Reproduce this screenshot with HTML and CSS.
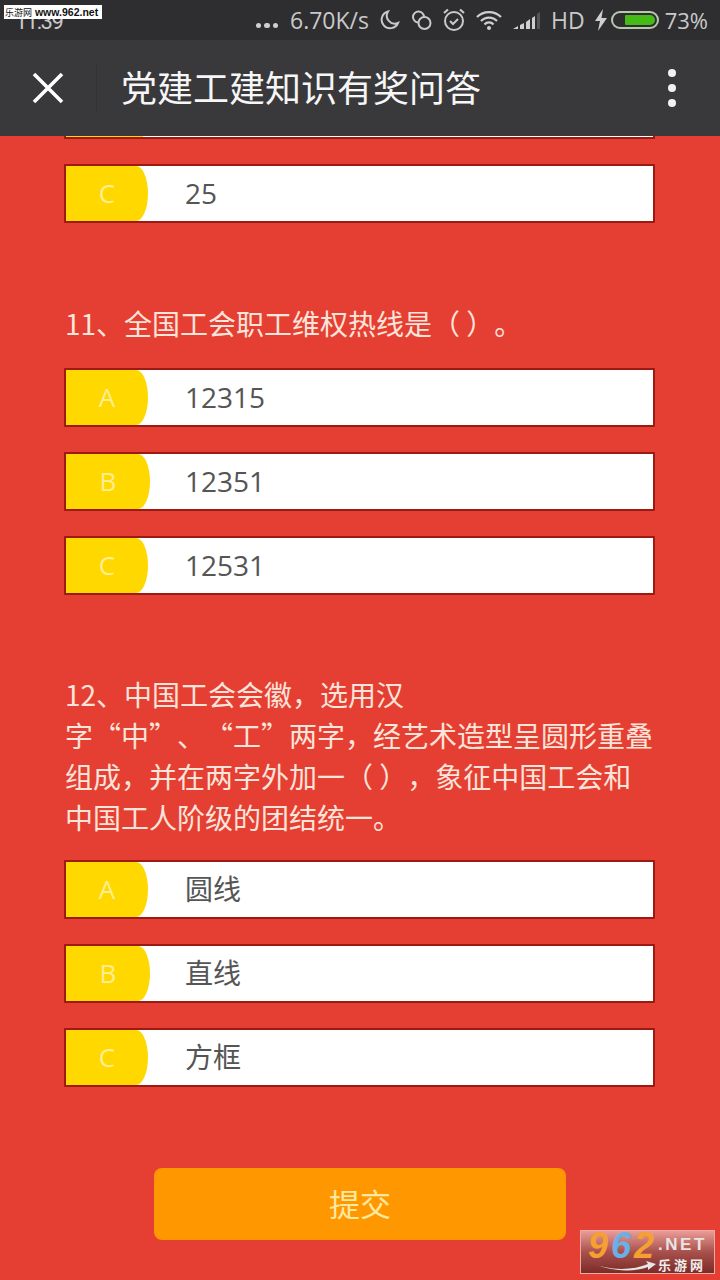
FILE: index.html
```html
<!DOCTYPE html>
<html lang="zh-CN">
<head>
<meta charset="utf-8">
<title>党建工建知识有奖问答</title>
<link rel="stylesheet" href="styles.css">
</head>
<body>
<div class="phone">
  <header class="status">
    <span class="time">11:39</span>
    <div class="status-right">
      <span class="dots"><i></i><i></i><i></i></span>
      <span class="speed">6.70K/s</span>
      <svg class="ic" width="20" height="22" viewBox="0 0 20 22"><path d="M8 2.500a8.500 8.500 0 1 0 10 11.500 8 8 0 0 1-10-11.500z" fill="none" stroke="#c9c9c9" stroke-width="2"/></svg>
      <svg class="ic" width="21" height="22" viewBox="0 0 21 22"><circle cx="7.500" cy="8" r="5.500" fill="none" stroke="#c9c9c9" stroke-width="2"/><circle cx="13.500" cy="14" r="6" fill="#2e2e31" stroke="#c9c9c9" stroke-width="2"/></svg>
      <svg class="ic" width="22" height="24" viewBox="0 0 22 24"><circle cx="11" cy="13" r="9" fill="none" stroke="#c9c9c9" stroke-width="2"/><path d="M7 13l3 3 5-5" fill="none" stroke="#c9c9c9" stroke-width="2"/><path d="M1 5l4-3.500M21 5l-4-3.500" stroke="#c9c9c9" stroke-width="2.200"/></svg>
      <svg class="ic" width="26" height="20" viewBox="0 0 26 20"><path d="M1 7a17 17 0 0 1 24 0M5 11a11 11 0 0 1 16 0M8.500 14.500a6 6 0 0 1 9 0" fill="none" stroke="#cfcfcf" stroke-width="2.200"/><circle cx="13" cy="18" r="2" fill="#cfcfcf"/></svg>
      <svg class="ic" width="27" height="20" viewBox="0 0 27 20"><path d="M0 19l5-3v3zM7 15l4-2v6H7zM13 12l4-3v10h-4zM19 8l3-2v13h-3z" fill="#cfcfcf"/><path d="M24 4l3-2v17h-3z" fill="#55555a"/></svg>
      <span class="hd">HD</span>
      <svg class="ic bolt" width="12" height="22" viewBox="0 0 12 22"><path d="M8 0L0 12h5l-2 10 9-13H6.500z" fill="#cfcfcf"/></svg>
      <span class="battery"><span class="battery-fill"></span></span>
      <span class="pct">73%</span>
    </div>
  </header>

  <nav class="nav">
    <svg class="close" width="34" height="34" viewBox="0 0 34 34"><path d="M3 3l28 28M31 3L3 31" stroke="#fff" stroke-width="3.600"/></svg>
    <span class="divider"></span>
    <h1 class="title">党建工建知识有奖问答</h1>
    <span class="more"><i></i><i></i><i></i></span>
  </nav>

  <main class="content">
    <div class="option-cut"><span class="option-cut-badge"></span></div>
    <div class="option option-first"><span class="badge">C</span><span class="answer">25</span></div>

    <section class="question q-eleven">
      <p class="q-text">11、全国工会职工维权热线是（ ）。</p>
      <div class="option"><span class="badge">A</span><span class="answer">12315</span></div>
      <div class="option"><span class="badge badge-wide">B</span><span class="answer">12351</span></div>
      <div class="option"><span class="badge">C</span><span class="answer">12531</span></div>
    </section>

    <section class="question q-twelve">
      <p class="q-text">12、中国工会会徽，选用汉<br>字“中”、“工”两字，经艺术造型呈圆形重叠组成，并在两字外加一（ ），象征中国工会和中国工人阶级的团结统一。</p>
      <div class="option"><span class="badge">A</span><span class="answer">圆线</span></div>
      <div class="option"><span class="badge badge-wide">B</span><span class="answer">直线</span></div>
      <div class="option"><span class="badge">C</span><span class="answer">方框</span></div>
    </section>

    <div class="submit-row"><button class="submit" type="button">提交</button></div>
  </main>

  <div class="mark-top"><span class="mark-cn">乐游网</span> www.962.net</div>
  <div class="mark-bottom">
    <span class="mark-num"><span class="n-o">9</span><span class="n-b">6</span><span class="n-o">2</span></span>
    <span class="mark-side"><span class="mark-net">.NET</span><span class="mark-yx">乐游网</span></span>
    <svg class="mark-swoosh" width="68" height="12" viewBox="0 0 68 12"><path d="M0 1c18 10 44 10 60 3l-2-3 10 3-8 6 0-3C44 13 18 11 0 1z" fill="#e6e6e6"/></svg>
  </div>
</div>
</body>
</html>
```

FILE: styles.css
```css
* { box-sizing: border-box; }
html, body { margin: 0; padding: 0; }
body {
  width: 720px;
  height: 1280px;
  overflow: hidden;
  font-family: "Noto Sans CJK SC", "Open Sans", sans-serif;
  text-spacing-trim: space-all;
}
.phone {
  position: relative;
  width: 720px;
  height: 1280px;
  display: flex;
  flex-direction: column;
  background: #e53f33;
  overflow: hidden;
}

/* status bar */
.status {
  flex: none;
  height: 40px;
  background: #2e2e31;
  color: #c9c9c9;
  display: flex;
  align-items: center;
  justify-content: space-between;
  padding: 0 12px 0 15px;
  font-family: "Open Sans", sans-serif;
  font-size: 23px;
}
.time {
  position: relative;
  top: 1px;
  font-family: Roboto, sans-serif;
  font-size: 22px;
  letter-spacing: -1.500px;
}
.status-right { display: flex; align-items: center; gap: 11px; }
.dots { display: flex; gap: 3px; margin-right: 1px; align-self: flex-end; padding-bottom: 8px; }
.dots i { width: 5.500px; height: 5.500px; border-radius: 50%; background: #cfcfcf; }
.ic { display: block; }
.bolt { margin-left: -1px; }
.pct { font-size: 22px; }
.battery {
  width: 48px;
  height: 18px;
  margin-left: -7px;
  margin-right: -5px;
  border: 2px solid #b9c9b0;
  border-radius: 9px;
  padding: 2px 2px 2px 12px;
  display: flex;
}
.battery-fill { flex: 1; background: #46bb15; border-radius: 1px 5px 5px 1px; }

/* nav */
.nav {
  flex: none;
  height: 96px;
  background: #39393c;
  display: flex;
  align-items: center;
  color: #fff;
  position: relative;
  z-index: 1;
}
.close { margin: 0 0 0 31px; flex: none; }
.divider { width: 1px; height: 48px; background: #333336; margin-left: 31px; }
.title {
  margin: 0 0 0 24px;
  padding-bottom: 4px;
  font-size: 36px;
  font-weight: 400;
  line-height: 1;
  flex: 1;
  color: #f6f6f6;
}
.more {
  display: flex;
  flex-direction: column;
  gap: 7px;
  margin-right: 44px;
}
.more i { width: 8px; height: 8px; border-radius: 50%; background: #f2f2f2; }

/* content */
.content { flex: 1; padding: 0 65px 0 64px; }
.option-cut {
  height: 3px;
  border-bottom: 2px solid #9c1a12;
  border-left: 2px solid #9c1a12;
  border-right: 2px solid #9c1a12;
  background: #fff;
  display: flex;
}
.option-cut-badge { width: 77px; background: #ffd800; }
.option {
  height: 59px;
  display: flex;
  align-items: center;
  background: #fff;
  border: 2px solid #9c1a12;
  border-radius: 1px;
  margin-bottom: 25px;
}
.option-first { margin-top: 25px; margin-bottom: 0; }
.badge {
  flex: none;
  width: 82px;
  height: 100%;
  background: #ffd800;
  color: #ffee94;
  font-family: "Open Sans", sans-serif;
  font-size: 26px;
  display: flex;
  align-items: center;
  justify-content: center;
  padding-bottom: 2px;
  border-radius: 0 12px 12px 0 / 0 50% 50% 0;
}
.badge-wide { width: 84px; }
.answer {
  margin-left: 37px;
  padding-bottom: 2px;
  color: #555;
  font-family: "Open Sans", "Noto Sans CJK SC", sans-serif;
  font-size: 28px;
  line-height: 1;
}
.badge-wide + .answer { margin-left: 35px; }
.question .option:last-child { margin-bottom: 0; }
.q-eleven { margin-top: 80px; }
.q-twelve { margin-top: 79px; }
.q-text {
  margin: 0 0 22px 1px;
  font-size: 28px;
  line-height: 41px;
  color: #fbe4da;
}
.q-eleven .q-text { margin-bottom: 24px; }

/* submit */
.submit-row { display: flex; justify-content: center; margin-top: 81px; padding-left: 1px; }
.submit {
  width: 412px;
  height: 72px;
  border: none;
  border-radius: 8px;
  background: #ff9800;
  color: #ffe9a0;
  font-family: "Noto Sans CJK SC", sans-serif;
  font-size: 31px;
  padding: 0 0 4px;
}

/* watermarks */
.mark-top {
  position: absolute;
  left: 4px;
  top: 5px;
  width: 98px;
  height: 14px;
  background: #fff;
  color: #111;
  font-family: "Liberation Sans", "Noto Sans CJK SC", sans-serif;
  font-size: 10.500px;
  font-weight: 700;
  line-height: 14px;
  white-space: nowrap;
  z-index: 2;
  padding-left: 1px;
}
.mark-cn { font-weight: 400; font-family: "Noto Sans CJK SC", sans-serif; font-size: 9px; }
.mark-bottom {
  position: absolute;
  left: 580px;
  top: 1230px;
  width: 135px;
  height: 44px;
  border: 1px solid #efaaa5;
  background: linear-gradient(180deg, #ea9c96 0%, #a8504c 50%, #7c2b28 100%);
  display: flex;
  padding-left: 7px;
  z-index: 2;
}
.mark-num {
  font-family: "Liberation Sans", sans-serif;
  font-size: 36px;
  font-weight: 700;
  font-style: italic;
  line-height: 30px;
  letter-spacing: 3px;
}
.n-o { color: #f5a030; }
.n-b { color: #6ab0e8; }
.mark-side { display: flex; flex-direction: column; margin-left: 1px; }
.mark-net {
  font-family: "Liberation Sans", sans-serif;
  font-size: 17px;
  font-weight: 700;
  color: #e9e4e2;
  letter-spacing: 2.500px;
  line-height: 17px;
  margin-top: 5px;
}
.mark-yx {
  font-family: "Noto Sans CJK SC", sans-serif;
  font-size: 13px;
  font-weight: 700;
  letter-spacing: 3px;
  line-height: 17px;
  margin-top: 3px;
  color: #eee;
}
.mark-swoosh { position: absolute; left: 7px; top: 29px; }
```
